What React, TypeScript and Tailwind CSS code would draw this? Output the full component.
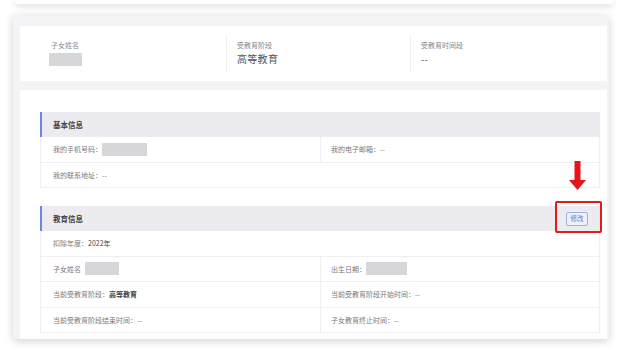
import React from 'react';

const Redacted = ({ w }: { w: number }) => (
  <span className="inline-block h-[13px] bg-[#d7d7d9] align-middle" style={{ width: w }} />
);

function SectionHeader({ title, children }: { title: string; children?: React.ReactNode }) {
  return (
    <div className="relative h-[25px] bg-[#ececf0] border-l-2 border-[#6f87d8] flex items-center justify-between pl-[11px] pr-[12px]">
      <span className="text-[7.5px] font-bold text-[#444]">{title}</span>
      {children}
    </div>
  );
}

function Row({ left, right }: { left: React.ReactNode; right?: React.ReactNode }) {
  return (
    <div className="h-[25.5px] flex border-b border-l border-r border-[#efeff2] text-[7px] text-[#7a7a7a]">
      <div className={`flex items-center pl-[12px] ${right !== undefined ? 'w-[280px] border-r border-[#efeff2]' : 'flex-1'}`}>
        {left}
      </div>
      {right !== undefined && <div className="flex-1 flex items-center pl-[10px]">{right}</div>}
    </div>
  );
}

function App() {
  return (
    <div className="w-[628px] h-[350px] bg-white overflow-hidden font-['Noto_Sans_CJK_SC','Noto_Sans',sans-serif]">
      {/* previous card edge */}
      <div className="mx-[15px] h-[4px] bg-white rounded-b-[3px] shadow-[0_2px_6px_rgba(0,0,0,0.18)]" />

      <div className="mt-[11px] ml-[13px] w-[596px] h-[324px] bg-[#f4f4f7] rounded-[3px] shadow-[0_2px_8px_rgba(0,0,0,0.18)] pt-[11px] pl-[7px] pr-[2px] overflow-hidden">
        {/* summary */}
        <div className="h-[55px] bg-white flex py-[9px]">
          <div className="w-[206px] pl-[31px] pt-[5px]">
            <div className="text-[7px] leading-[10px] text-[#888]">子女姓名</div>
            <div className="mt-[2px] h-[14px] flex items-center -ml-[2px]"><Redacted w={33} /></div>
          </div>
          <div className="w-[184px] border-l border-[#f0f0f2] pl-[10px] pt-[5px]">
            <div className="text-[7px] leading-[10px] text-[#888]">受教育阶段</div>
            <div className="mt-[2px] text-[10px] leading-[14px] text-[#555] tracking-[0.3px]">高等教育</div>
          </div>
          <div className="flex-1 border-l border-[#f0f0f2] pl-[10px] pt-[5px]">
            <div className="text-[7px] leading-[10px] text-[#888]">受教育时间段</div>
            <div className="mt-[2px] text-[10px] leading-[14px] text-[#666]">--</div>
          </div>
        </div>

        {/* details */}
        <div className="mt-[9px] bg-white h-[260px] pt-[22px] pl-[20px] pr-[7px]">
          <SectionHeader title="基本信息" />
          <Row
            left={<><span>我的手机号码：</span><Redacted w={45} /></>}
            right={<span>我的电子邮箱：--</span>}
          />
          <Row left={<span>我的联系地址：--</span>} />

          <div className="h-[18px]" />

          <SectionHeader title="教育信息">
            <button className="h-[14px] w-[22px] rounded-[2px] border border-[#9fb1e6] bg-[#eef1fb] text-[6.5px] text-[#5a78d4] leading-none">
              修改
            </button>
            <div className="absolute right-[-2px] top-[-5px] w-[47px] h-[32px] border-2 border-[#e31b1b] rounded-[2px] pointer-events-none" />
            <svg className="absolute right-[14px] top-[-45px]" width="17" height="30" viewBox="0 0 17 30">
              <rect x="5.5" y="0" width="6" height="20" fill="#e8141b" />
              <polygon points="0,19 17,19 8.5,29" fill="#e8141b" />
            </svg>
          </SectionHeader>
          <Row left={<><span>扣除年度：</span><span className="text-[#444]">2022年</span></>} />
          <Row
            left={<><span className="mr-[4px]">子女姓名</span><Redacted w={34} /></>}
            right={<><span>出生日期：</span><Redacted w={41} /></>}
          />
          <Row
            left={<><span>当前受教育阶段：</span><span className="text-[#444] font-semibold">高等教育</span></>}
            right={<span>当前受教育阶段开始时间：--</span>}
          />
          <Row
            left={<span>当前受教育阶段结束时间：--</span>}
            right={<span>子女教育终止时间：--</span>}
          />
        </div>
      </div>
    </div>
  );
}

export default App;
